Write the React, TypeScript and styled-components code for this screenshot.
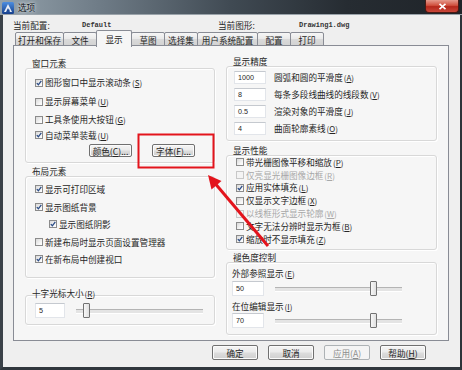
import styled, { createGlobalStyle } from 'styled-components'

type CheckItem = {
  label: string
  mn?: string
  checked?: boolean
  disabled?: boolean
  indent?: boolean
  h?: number
}

const windowItems: CheckItem[] = [
  { label: '图形窗口中显示滚动条', mn: 'S', checked: true, h: 19 },
  { label: '显示屏幕菜单', mn: 'U', h: 19 },
  { label: '工具条使用大按钮', mn: 'G', h: 17 },
  { label: '自动菜单装载', mn: 'U', checked: true, h: 14 },
]

const layoutItems: CheckItem[] = [
  { label: '显示可打印区域', checked: true, h: 17.5 },
  { label: '显示图纸背景', checked: true, h: 17.5 },
  { label: '显示图纸阴影', checked: true, indent: true, h: 17.5 },
  { label: '新建布局时显示页面设置管理器', h: 17.5 },
  { label: '在新布局中创建视口', checked: true, h: 17.5 },
]

const perfItems: CheckItem[] = [
  { label: '带光栅图像平移和缩放', mn: 'P' },
  { label: '仅亮显光栅图像边框', mn: 'R', disabled: true },
  { label: '应用实体填充', mn: 'L', checked: true },
  { label: '仅显示文字边框', mn: 'X' },
  { label: '以线框形式显示轮廓', mn: 'W', disabled: true },
  { label: '文字无法分辨时显示为框', mn: 'B' },
  { label: '缩放时不显示填充', mn: 'Z', checked: true },
]

const precision = [
  { value: '1000', label: '圆弧和圆的平滑度', mn: 'A' },
  { value: '8', label: '每条多段线曲线的线段数', mn: 'V' },
  { value: '0.5', label: '渲染对象的平滑度', mn: 'J' },
  { value: '4', label: '曲面轮廓素线', mn: 'O' },
]

const tabs = [
  { name: '打开和保存', w: 49 },
  { name: '文件', w: 34 },
  { name: '显示', w: 36, active: true },
  { name: '草图', w: 34 },
  { name: '选择集', w: 34 },
  { name: '用户系统配置', w: 61 },
  { name: '配置', w: 34 },
  { name: '打印', w: 34 },
]

const GlobalStyle = createGlobalStyle`
  html, body { margin: 0; padding: 0; background: #232a30; }
  * { box-sizing: border-box; }
`

const Mn = ({ k }: { k: string }) => (
  <Key>
    (<u>{k}</u>)
  </Key>
)

const Check = ({ item }: { item: CheckItem }) => (
  <CheckRow $h={item.h ?? 12.8} $indent={item.indent} $disabled={item.disabled}>
    <Box $disabled={item.disabled}>
      {item.checked && (
        <svg width='6' height='6' viewBox='0 0 6 6'>
          <path d='M0.8 3.1 L2.4 4.8 L5.3 0.9' fill='none' stroke='#2b4c86' strokeWidth='1.3' />
        </svg>
      )}
    </Box>
    <span>
      {item.label}
      {item.mn && <Mn k={item.mn} />}
    </span>
  </CheckRow>
)

const App = () => {
  return (
    <>
      <GlobalStyle />
      <Window>
        <TitleBar>
          <AppIcon>
            <svg width='12' height='12' viewBox='0 0 12 12'>
              <defs>
                <linearGradient id='ic' x1='0' y1='0' x2='0' y2='1'>
                  <stop offset='0' stopColor='#4d8ee0' />
                  <stop offset='1' stopColor='#173f8c' />
                </linearGradient>
              </defs>
              <rect x='0' y='0' width='12' height='12' rx='1.5' fill='url(#ic)' />
              <path d='M2 10 L6 2 L10 10 L8 10 L6 6 L4 10 Z' fill='#e8eef8' />
              <path d='M5 8.2 L7.8 8.2' stroke='#173f8c' strokeWidth='0.8' />
            </svg>
          </AppIcon>
          <Title>选项</Title>
          <CloseButton>
            <svg width='9' height='7' viewBox='0 0 9 7'>
              <path d='M1.5 0.8 L7.5 6.2 M7.5 0.8 L1.5 6.2' stroke='#fff' strokeWidth='1.6' />
            </svg>
          </CloseButton>
        </TitleBar>

        <Frame>
          <InfoRow>
            <InfoPart $w={205}>
              <InfoLabel $w={69}>当前配置:</InfoLabel>
              <InfoValue>Default</InfoValue>
            </InfoPart>
            <InfoPart>
              <InfoLabel $w={81}>当前图形:</InfoLabel>
              <InfoValue>Drawing1.dwg</InfoValue>
            </InfoPart>
          </InfoRow>

          <TabStrip>
            {tabs.map((t) => (
              <Tab key={t.name} $w={t.w} $active={t.active}>
                {t.name}
              </Tab>
            ))}
          </TabStrip>

          <Panel>
            <Column $w={190}>
              <GroupLabel $mt={12}>窗口元素</GroupLabel>
              <GroupBox $h={95} $pt={4}>
                {windowItems.map((it) => (
                  <Check key={it.label} item={it} />
                ))}
                <GroupButtons>
                  <Button $w={43}>
                    颜色(<u>C</u>)...
                  </Button>
                  <Button $w={43}>
                    字体(<u>F</u>)...
                  </Button>
                </GroupButtons>
              </GroupBox>

              <GroupLabel $mt={3}>布局元素</GroupLabel>
              <GroupBox $h={102} $pt={3.5}>
                {layoutItems.map((it) => (
                  <Check key={it.label} item={it} />
                ))}
              </GroupBox>

              <GroupLabel $mt={10}>
                十字光标大小<Mn k='R' />
              </GroupLabel>
              <GroupBox $h={30} $pt={7} $mt={-3}>
                <SliderRow>
                  <NumInput $w={30}>5</NumInput>
                  <Slider $w={127} $ml={11}>
                    <Thumb $left={7} />
                  </Slider>
                </SliderRow>
              </GroupBox>
            </Column>

            <Column $w={211}>
              <GroupLabel $mt={10}>显示精度</GroupLabel>
              <GroupBox $h={75} $pt={4} $gap={4} $pl={7}>
                {precision.map((p) => (
                  <FieldRow key={p.label}>
                    <NumInput $w={32}>{p.value}</NumInput>
                    <span>
                      {p.label}
                      <Mn k={p.mn} />
                    </span>
                  </FieldRow>
                ))}
              </GroupBox>

              <GroupLabel $mt={4}>显示性能</GroupLabel>
              <GroupBox $h={95} $pt={0}>
                {perfItems.map((it) => (
                  <Check key={it.label} item={it} />
                ))}
              </GroupBox>

              <GroupLabel $mt={2}>褪色度控制</GroupLabel>
              <GroupBox $h={73} $pt={5} $pl={5}>
                <SubLabel>
                  外部参照显示<Mn k='E' />
                </SubLabel>
                <SliderRow $mt={3}>
                  <NumInput $w={32}>50</NumInput>
                  <Slider $w={127} $ml={11}>
                    <Thumb $left={95} />
                  </Slider>
                </SliderRow>
                <SubLabel $mt={5}>
                  在位编辑显示<Mn k='I' />
                </SubLabel>
                <SliderRow $mt={2}>
                  <NumInput $w={32}>70</NumInput>
                  <Slider $w={127} $ml={11}>
                    <Thumb $left={95} />
                  </Slider>
                </SliderRow>
              </GroupBox>
            </Column>
          </Panel>

          <DialogButtons>
            <Button $w={46} $h={15}>确定</Button>
            <Button $w={46} $h={15}>取消</Button>
            <Button $w={46} $h={15} $disabled>
              应用(<u>A</u>)
            </Button>
            <Button $w={46} $h={15}>
              帮助(<u>H</u>)
            </Button>
          </DialogButtons>
        </Frame>

        <Annotation width='462' height='370' viewBox='0 0 462 370'>
          <rect x='138.5' y='134.5' width='75' height='33' fill='none' stroke='#e3141c' strokeWidth='2' />
          <line x1='268' y1='246' x2='216' y2='184.5' stroke='#e3141c' strokeWidth='3' />
          <polygon points='208,175 221.5,181 211.5,189.5' fill='#e3141c' />
        </Annotation>
      </Window>
    </>
  )
}

export default App

const Window = styled.div`
  position: relative;
  width: 462px;
  height: 370px;
  display: flex;
  flex-direction: column;
  overflow: hidden;
  font-family: 'Noto Sans CJK SC', 'Noto Sans', sans-serif;
  font-size: 8.6px;
  line-height: 10px;
  color: #262626;
`
const TitleBar = styled.div`
  height: 15px;
  flex: none;
  display: flex;
  align-items: flex-start;
  padding: 0 3px 0 2px;
  background: linear-gradient(to right, #93a1ab 0%, #6e7b86 22%, #404a53 50%, #262c32 75%, #1f2429 100%);
  border-bottom: 1px solid #9aa3aa;
`
const AppIcon = styled.span`
  width: 12px;
  height: 12px;
  margin-top: 2px;
  display: flex;
`
const Title = styled.span`
  margin: 2px 0 0 4px;
  font-size: 8.6px;
  line-height: 11px;
  color: #101418;
  text-shadow: 0 0 3px rgba(255, 255, 255, 0.9), 0 0 6px rgba(255, 255, 255, 0.6);
`
const CloseButton = styled.span`
  margin-left: auto;
  width: 34px;
  height: 13px;
  display: flex;
  align-items: center;
  justify-content: center;
  border: 1px solid #4a1a14;
  border-top: none;
  border-radius: 0 0 4px 4px;
  background: linear-gradient(#e59a8c 0%, #d0503e 45%, #b5281b 55%, #c9473a 100%);
`
const Frame = styled.div`
  flex: 1;
  display: flex;
  flex-direction: column;
  padding: 4px 34px 0 10px;
  background: #efefef;
  border-left: 3px solid #3a4148;
  border-right: 2px solid #2c3339;
  border-bottom: 3px solid #30373d;
`
const InfoRow = styled.div`
  height: 11px;
  display: flex;
  align-items: center;
`
const InfoPart = styled.div<{ $w?: number }>`
  display: flex;
  align-items: center;
  width: ${(p) => (p.$w ? `${p.$w}px` : 'auto')};
`
const InfoLabel = styled.span<{ $w: number }>`
  width: ${(p) => p.$w}px;
`
const InfoValue = styled.span`
  font-family: 'Liberation Mono', 'DejaVu Sans Mono', monospace;
  font-size: 7px;
  font-weight: bold;
  color: #333;
`
const TabStrip = styled.div`
  height: 16px;
  display: flex;
  align-items: flex-end;
  padding-left: 2px;
  position: relative;
  z-index: 1;
`
const Tab = styled.div<{ $w: number; $active?: boolean }>`
  width: ${(p) => p.$w}px;
  height: ${(p) => (p.$active ? 17 : 14)}px;
  margin-left: -1px;
  margin-bottom: ${(p) => (p.$active ? -1 : 0)}px;
  display: flex;
  align-items: center;
  justify-content: center;
  padding-top: ${(p) => (p.$active ? 0 : 1)}px;
  border: 1px solid #898c95;
  border-bottom: ${(p) => (p.$active ? 'none' : '1px solid #898c95')};
  border-radius: 2px 2px 0 0;
  background: ${(p) => (p.$active ? '#f6f6f6' : 'linear-gradient(#f6f6f6 0%, #e9e9e9 50%, #dadada 51%, #d3d3d3 100%)')};
  position: relative;
  z-index: ${(p) => (p.$active ? 2 : 1)};
  &:first-child {
    margin-left: 0;
  }
`
const Panel = styled.div`
  width: 436px;
  height: 296px;
  margin-top: -1px;
  display: flex;
  gap: 11px;
  padding: 0 11px;
  border: 1px solid #898c95;
  background: #f6f6f6;
`
const Column = styled.div<{ $w: number }>`
  width: ${(p) => p.$w}px;
  display: flex;
  flex-direction: column;
`
const GroupLabel = styled.div<{ $mt: number }>`
  height: 10px;
  margin-top: ${(p) => p.$mt}px;
  padding-left: 7px;
  position: relative;
  z-index: 1;
`
const GroupBox = styled.div<{ $h: number; $pt: number; $mt?: number; $gap?: number; $pl?: number }>`
  height: ${(p) => p.$h}px;
  margin-top: ${(p) => p.$mt ?? 0}px;
  padding: ${(p) => p.$pt}px 6px 0 ${(p) => p.$pl ?? 9}px;
  display: flex;
  flex-direction: column;
  gap: ${(p) => p.$gap ?? 0}px;
  border: 1px solid #d8d8d8;
  border-radius: 3px;
  box-shadow: inset 1px 1px 0 #ffffff, 1px 1px 0 #ffffff;
`
const CheckRow = styled.div<{ $h: number; $indent?: boolean; $disabled?: boolean }>`
  height: ${(p) => p.$h}px;
  flex: none;
  display: flex;
  align-items: center;
  gap: 2px;
  padding-left: ${(p) => (p.$indent ? 14 : 0)}px;
  color: ${(p) => (p.$disabled ? '#a8a8a8' : '#262626')};
  white-space: nowrap;
`
const Box = styled.span<{ $disabled?: boolean }>`
  width: 8px;
  height: 8px;
  flex: none;
  display: flex;
  align-items: center;
  justify-content: center;
  border: 1px solid ${(p) => (p.$disabled ? '#c8c8c8' : '#8b8b8b')};
  background: ${(p) => (p.$disabled ? '#f4f4f4' : 'linear-gradient(135deg, #d9d9d9 0%, #f7f7f7 70%, #ffffff 100%)')};
`
const Key = styled.span`
  margin-left: 1px;
  font-size: 8px;
  u {
    text-underline-offset: 1px;
  }
`
const GroupButtons = styled.div`
  display: flex;
  gap: 20px;
  margin-top: 2px;
  padding-left: 54px;
`
const Button = styled.div<{ $w: number; $h?: number; $disabled?: boolean }>`
  width: ${(p) => p.$w}px;
  height: ${(p) => p.$h ?? 13}px;
  display: flex;
  align-items: center;
  justify-content: center;
  border: 1px solid ${(p) => (p.$disabled ? '#adb2b5' : '#707070')};
  border-radius: 2px;
  color: ${(p) => (p.$disabled ? '#8d8d8d' : '#262626')};
  background: ${(p) => (p.$disabled ? '#f4f4f4' : 'linear-gradient(#f4f4f4 0%, #ebebeb 48%, #dddddd 52%, #cfcfcf 100%)')};
  box-shadow: inset 0 0 0 1px ${(p) => (p.$disabled ? '#f4f4f4' : '#fbfbfb')};
  white-space: nowrap;
`
const FieldRow = styled.div`
  height: 13px;
  display: flex;
  align-items: center;
  gap: 8px;
  white-space: nowrap;
`
const NumInput = styled.div<{ $w: number }>`
  width: ${(p) => p.$w}px;
  height: 100%;
  flex: none;
  display: flex;
  align-items: center;
  padding-left: 3px;
  font-family: 'Liberation Sans', Arial, sans-serif;
  font-size: 7.2px;
  background: #fff;
  border: 1px solid #e2e5ea;
  border-top-color: #c5c9cf;
`
const SliderRow = styled.div<{ $mt?: number }>`
  height: 15px;
  margin-top: ${(p) => p.$mt ?? 0}px;
  display: flex;
  align-items: stretch;
`
const Slider = styled.div<{ $w: number; $ml: number }>`
  position: relative;
  width: ${(p) => p.$w}px;
  margin-left: ${(p) => p.$ml}px;
  &::before {
    content: '';
    position: absolute;
    left: 0;
    right: 0;
    top: 6px;
    height: 3px;
    border-top: 1px solid #b4b4b4;
    border-bottom: 1px solid #ffffff;
    background: #e4e4e4;
  }
`
const Thumb = styled.span<{ $left: number }>`
  position: absolute;
  top: 0;
  left: ${(p) => p.$left}px;
  width: 7px;
  height: 15px;
  border: 1px solid #727272;
  border-radius: 1px;
  background: linear-gradient(to right, #f7f7f7, #e0e0e0);
`
const SubLabel = styled.div<{ $mt?: number }>`
  height: 10px;
  margin-top: ${(p) => p.$mt ?? 0}px;
  white-space: nowrap;
`
const DialogButtons = styled.div`
  margin-top: 4px;
  display: flex;
  justify-content: flex-end;
  gap: 10px;
`
const Annotation = styled.svg`
  position: absolute;
  left: 0;
  top: 0;
  pointer-events: none;
`
